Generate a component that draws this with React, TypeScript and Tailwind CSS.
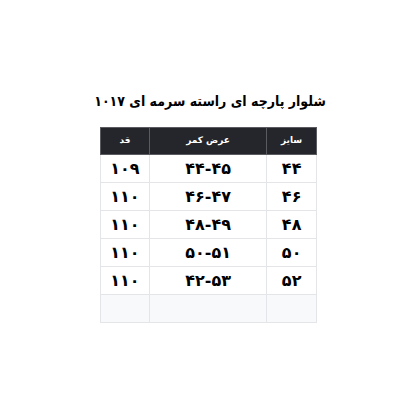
const rows = [
  ["۴۴", "۴۴-۴۵", "۱۰۹"],
  ["۴۶", "۴۶-۴۷", "۱۱۰"],
  ["۴۸", "۴۸-۴۹", "۱۱۰"],
  ["۵۰", "۵۰-۵۱", "۱۱۰"],
  ["۵۲", "۴۲-۵۳", "۱۱۰"],
  ["", "", ""],
];

const App = () => (
  <main
    dir="rtl"
    className="w-[420px] h-[420px] bg-white flex flex-col items-center pt-[89px] font-['DejaVu_Sans',sans-serif]"
  >
    <h1 className="text-[14px] font-bold text-black leading-[24px] mb-[14px] font-['DejaVu_Sans_Condensed','DejaVu_Sans',sans-serif]">
      شلوار پارچه ای راسته سرمه ای ۱۰۱۷
    </h1>
    <table className="w-[217px] mr-[3px] border-collapse border border-[#e3e5e8] text-center">
      <thead>
        <tr className="bg-[#25262b] text-white text-[9px] font-bold h-[27px]">
          <th className="w-[50px] border border-[#5a5b60]">سایز</th>
          <th className="w-[118px] border border-[#5a5b60]">عرض کمر</th>
          <th className="w-[49px] border border-[#5a5b60]">قد</th>
        </tr>
      </thead>
      <tbody>
        {rows.map((r, i) => (
          <tr
            key={i}
            className={`h-[28px] text-[16px] font-bold text-black ${i === 5 ? "bg-[#f8f9fb]" : "bg-white"}`}
          >
            {r.map((c, j) => (
              <td key={j} className="border border-[#e3e5e8] leading-none">
                {c}
              </td>
            ))}
          </tr>
        ))}
      </tbody>
    </table>
  </main>
);

export default App;
